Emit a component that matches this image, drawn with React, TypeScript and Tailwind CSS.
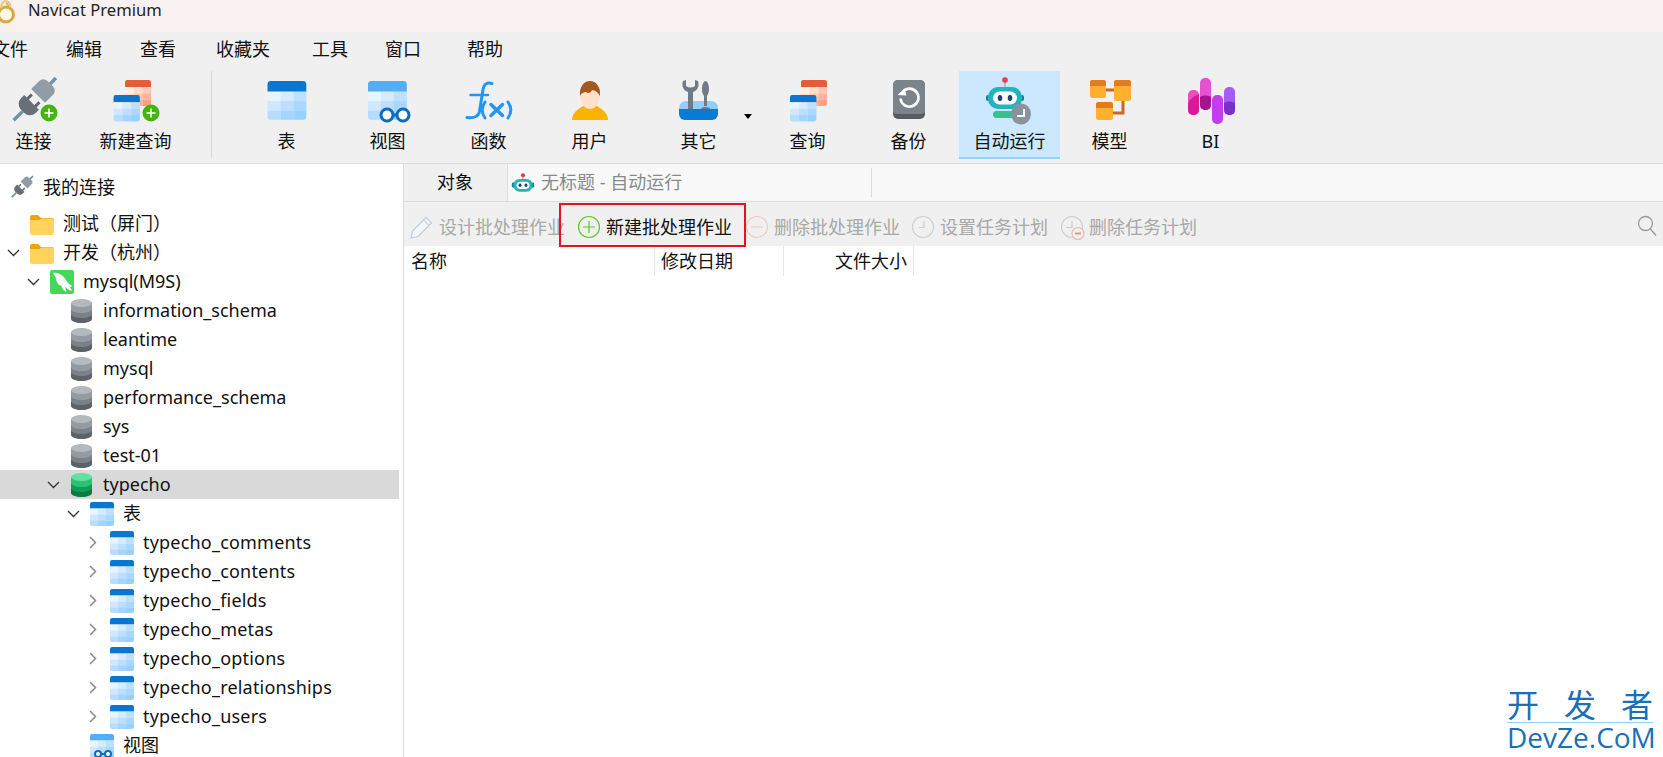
import type { ReactNode } from "react";

const BLUE = {
  head: "#0b76cf",
  cells: ["#e8f4ff", "#d6ebff", "#bde0ff", "#d0e8ff", "#bcdeff", "#a8d7ff", "#b6dcff", "#a4d5ff", "#98d0ff"],
};
const RED = {
  head: "#e65c38",
  cells: ["#ffeee8", "#ffdccf", "#ffc7b4", "#ffdccf", "#ffc7b4", "#ffb199", "#ffc7b4", "#ffb199", "#ff9f84"],
};

// 40x40 grid with a coloured head, placed with x/y and scale
function Grid({ x = 0, y = 0, s = 1, theme = BLUE, head }: { x?: number; y?: number; s?: number; theme?: typeof BLUE; head?: string }) {
  const cols = [0, 13.4, 26.7];
  const rows = [11, 20.7, 30.3];
  return (
    <g transform={`translate(${x} ${y}) scale(${s})`}>
      <path d="M0 3.5A3.5 3.5 0 0 1 3.5 0h33A3.5 3.5 0 0 1 40 3.5V11H0z" fill={head ?? theme.head} />
      {rows.map((ry, r) =>
        cols.map((cx, c) => {
          const fill = theme.cells[r * 3 + c];
          if (r === 2 && c === 0) return <path key={c} d="M0 30.3h13.4V40H3.5A3.5 3.5 0 0 1 0 36.5z" fill={fill} />;
          if (r === 2 && c === 2) return <path key={c} d="M26.7 30.3H40v6.2a3.5 3.5 0 0 1-3.5 3.5h-9.8z" fill={fill} />;
          return <rect key={`${r}${c}`} x={cx} y={ry} width="13.4" height="9.7" fill={fill} />;
        })
      )}
    </g>
  );
}

function Badge() {
  return (
    <g>
      <circle cx="39" cy="37" r="8.5" fill="#43b50f" />
      <path d="M39 32.5v9M34.5 37h9" stroke="#fff" strokeWidth="1.6" />
    </g>
  );
}

function Plug() {
  return (
    <g transform="translate(24 24) scale(1.15) translate(-24 -24) rotate(45 24 24)">
      <rect x="22.5" y="-3" width="3" height="9" fill="#6d93ad" />
      <path d="M15.5 9a5 5 0 0 1 5-5h7a5 5 0 0 1 5 5v10h-17z" fill="#929ca5" />
      <path d="M18 22h2.6v6H18zM27.4 22H30v6h-2.6z" fill="#5f666d" />
      <path d="M15 27h18v4a7 7 0 0 1-7 7h-4a7 7 0 0 1-7-7z" fill="#686f76" />
      <rect x="22.5" y="38" width="3" height="11" fill="#6d93ad" />
    </g>
  );
}

function Glasses({ x1, x2, y, r, w }: { x1: number; x2: number; y: number; r: number; w: number }) {
  return (
    <g fill="#fff" stroke="#0b6cc4" strokeWidth={w}>
      <path d={`M${x1} ${y}H${x2}`} />
      <circle cx={x1} cy={y} r={r} />
      <circle cx={x2} cy={y} r={r} />
    </g>
  );
}

function Icon48({ children }: { children: ReactNode }) {
  return (
    <svg width="48" height="48" viewBox="0 0 48 48" className="overflow-visible">
      {children}
    </svg>
  );
}

const toolbarIcons: Record<string, ReactNode> = {
  connect: (
    <>
      <Plug />
      <Badge />
    </>
  ),
  newQuery: (
    <>
      <Grid x={13} y={4} s={0.65} theme={RED} />
      <Grid x={1.5} y={19} s={0.66} />
      <Badge />
    </>
  ),
  table: <Grid x={4.5} y={5} s={0.97} />,
  view: (
    <>
      <Grid x={4} y={5} s={0.97} head="#55aef5" />
      <Glasses x1={23} x2={39} y={39} r={6} w={3} />
    </>
  ),
  func: (
    <g fill="none" stroke="#2196f3" strokeLinecap="round">
      <path d="M27 7.5c-5-1.500-8 .5-9 6l-3.500 22c-1 5-6 7-12.500 6" strokeWidth="3" />
      <path d="M5.500 19H23" strokeWidth="2.500" />
      <path d="M20 26c-3.500 5-3.500 11 0 16M43 26c3.500 5 3.500 11 0 16" strokeWidth="3" />
      <path d="M26 28.500l11.500 11M37.500 28.500L26 39.500" strokeWidth="3.500" />
    </g>
  ),
  user: (
    <>
      <path d="M6 44c0-7 6-11 11-14h14c5 3 11 7 11 14z" fill="#f8b400" />
      <ellipse cx="24" cy="19" rx="10" ry="14" fill="#ffe0c8" />
      <path d="M14 20c-1-9 4-15 10-15s11 6 10 15c-2-4-5-6-8-6-1 3-4 4-6 2-2 0-5 1-6 4z" fill="#a3591e" />
    </>
  ),
  tools: (
    <>
      <path d="M4 32a7 7 0 0 1 7-7h25a7 7 0 0 1 7 7v2H4z" fill="#93cdfb" />
      <path d="M8 5C6.500 10 8 14 13 16V34h5V16c5-2 6.500-6 5-11l-3-1v6q-4.500 3-9 0V4z" fill="#6f7b86" />
      <path d="M30.500 5c2 0 3.500 4 3.500 8s-1.500 6-2 7v10h-3V20c-.5-1-2-3-2-7s1.500-8 3.500-8z" fill="#6f7b86" />
      <path d="M26 32.500c1-2 8-2 9 0v1.500h-9z" fill="#6f7b86" />
      <path d="M4 33h39v5a6 6 0 0 1-6 6H10a6 6 0 0 1-6-6z" fill="#0b7ad2" />
    </>
  ),
  query: (
    <>
      <Grid x={17} y={4} s={0.65} theme={RED} />
      <Grid x={6} y={19} s={0.66} />
    </>
  ),
  backup: (
    <>
      <rect x="8" y="4" width="32" height="39" rx="5" fill="#565c63" />
      <path d="M8 9a5 5 0 0 1 5-5h22a5 5 0 0 1 5 5v25a4 4 0 0 1-4 4H12a4 4 0 0 1-4-4z" fill="#7c848b" />
      <path d="M19 14.500a9 9 0 1 1-3.500 8" fill="none" stroke="#fff" strokeWidth="2.600" />
      <path d="M12.500 19l9 .5-2-7z" fill="#fff" />
    </>
  ),
  robot: (
    <>
      <path d="M19 5v7" stroke="#a9b1b8" strokeWidth="1.500" />
      <circle cx="19" cy="4" r="2.800" fill="#ec3a4e" />
      <rect x="0" y="19" width="4" height="6" rx="2" fill="#1f7f95" />
      <rect x="34" y="19" width="4" height="6" rx="2" fill="#1f7f95" />
      <rect x="2" y="11" width="34" height="22" rx="10" fill="#22b5bd" />
      <rect x="7" y="15.500" width="24" height="13" rx="6.500" fill="#fff" />
      <ellipse cx="14" cy="22" rx="2.300" ry="3" fill="#24407a" />
      <ellipse cx="24" cy="22" rx="2.300" ry="3" fill="#24407a" />
      <rect x="7" y="35" width="24" height="7" rx="3.500" fill="#35c18f" />
      <ellipse cx="35" cy="38" rx="10" ry="10.500" fill="#8a939b" />
      <path d="M38 33v7h-7" fill="none" stroke="#fff" strokeWidth="2" />
    </>
  ),
  model: (
    <>
      <path d="M19 14h10M37 24v13H26" fill="none" stroke="#c96a22" strokeWidth="3" />
      <rect x="4" y="4" width="16" height="18" rx="2.500" fill="#ffb02e" />
      <path d="M4 6.500A2.500 2.500 0 0 1 6.500 4h11A2.500 2.500 0 0 1 20 6.500V10H4z" fill="#e27c20" />
      <rect x="28" y="4" width="17" height="21" rx="2.500" fill="#ffb02e" />
      <path d="M28 6.500A2.500 2.500 0 0 1 30.500 4h12A2.500 2.500 0 0 1 45 6.500V10H28z" fill="#e27c20" />
      <rect x="10" y="26" width="17" height="18" rx="2.500" fill="#ffb02e" />
      <path d="M10 28.500a2.500 2.500 0 0 1 2.500-2.500h12a2.500 2.500 0 0 1 2.500 2.500V32H10z" fill="#e27c20" />
    </>
  ),
  bi: (
    <>
      <rect x="1" y="14" width="11" height="25" rx="5" fill="#f04cc2" />
      <path d="M1 27c2-4 6-7 11-9v16a5 5 0 0 1-5 5H6a5 5 0 0 1-5-5z" fill="#d81b94" />
      <rect x="13" y="2" width="11" height="32" rx="5" fill="#e650d2" />
      <path d="M13 21c3-2 8-2 11 0v8a5 5 0 0 1-5 5h-1a5 5 0 0 1-5-5z" fill="#a5148f" />
      <rect x="25" y="19" width="11" height="29" rx="5" fill="#c43cf2" />
      <rect x="37" y="11" width="11" height="28" rx="5" fill="#a55cf6" />
      <path d="M37 27c3-2 8-2 11 0v7a5 5 0 0 1-5 5h-1a5 5 0 0 1-5-5z" fill="#7a30c8" />
    </>
  ),
};

const toolbar = [
  { label: "表", icon: "table" },
  { label: "视图", icon: "view" },
  { label: "函数", icon: "func" },
  { label: "用户", icon: "user" },
];
const toolbarRest = [
  { label: "查询", icon: "query" },
  { label: "备份", icon: "backup" },
  { label: "自动运行", icon: "robot", active: true },
  { label: "模型", icon: "model", cls: "ml-[-1px]" },
  { label: "BI", icon: "bi" },
];

function ToolButton({ label, icon, active, wide, cls = "" }: { label: string; icon: string; active?: boolean; wide?: boolean; cls?: string }) {
  return (
    <div className={`relative h-[88px] pt-[5px] shrink-0 ${wide ? "w-[117px]" : "w-[101px]"} ${active ? "bg-[#cce8ff] border-b-2 border-[#99d1ff]" : ""} ${cls}`}>
      <div className="flex flex-col items-center">
        <Icon48>{toolbarIcons[icon]}</Icon48>
        <span className="mt-[5px] text-[18px] leading-[24px]">{label}</span>
      </div>
      {wide && <span className="absolute left-[104px] top-[43px] w-0 h-0 border-x-[4px] border-t-[5px] border-x-transparent border-t-black" />}
    </div>
  );
}

const menus = [
  { label: "文件", cls: "ml-[-8px]" },
  { label: "编辑", cls: "ml-[38px]" },
  { label: "查看", cls: "ml-[38px]" },
  { label: "收藏夹", cls: "ml-[40px]" },
  { label: "工具", cls: "ml-[42px]" },
  { label: "窗口", cls: "ml-[37px]" },
  { label: "帮助", cls: "ml-[46px]" },
];

type Kind = "folder" | "mysql" | "db" | "dbOn" | "table" | "view";
type Row = { label: string; level: number; kind: Kind; chevron?: "open" | "closed"; selected?: boolean };

const rows: Row[] = [
  { label: "测试（屏门）", level: 0, kind: "folder" },
  { label: "开发（杭州）", level: 0, kind: "folder", chevron: "open" },
  { label: "mysql(M9S)", level: 1, kind: "mysql", chevron: "open" },
  { label: "information_schema", level: 2, kind: "db" },
  { label: "leantime", level: 2, kind: "db" },
  { label: "mysql", level: 2, kind: "db" },
  { label: "performance_schema", level: 2, kind: "db" },
  { label: "sys", level: 2, kind: "db" },
  { label: "test-01", level: 2, kind: "db" },
  { label: "typecho", level: 2, kind: "dbOn", chevron: "open", selected: true },
  { label: "表", level: 3, kind: "table", chevron: "open" },
  { label: "typecho_comments", level: 4, kind: "table", chevron: "closed" },
  { label: "typecho_contents", level: 4, kind: "table", chevron: "closed" },
  { label: "typecho_fields", level: 4, kind: "table", chevron: "closed" },
  { label: "typecho_metas", level: 4, kind: "table", chevron: "closed" },
  { label: "typecho_options", level: 4, kind: "table", chevron: "closed" },
  { label: "typecho_relationships", level: 4, kind: "table", chevron: "closed" },
  { label: "typecho_users", level: 4, kind: "table", chevron: "closed" },
  { label: "视图", level: 3, kind: "view" },
];

function Cylinder({ c }: { c: string[] }) {
  return (
    <g>
      <path d="M1 4v16c0 2.200 4.500 4 10.500 4S22 22.200 22 20V4z" fill={c[3]} />
      <path d="M1 4v11c0 2.200 4.500 4 10.500 4S22 17.200 22 15V4z" fill={c[2]} />
      <path d="M1 4v6c0 2.200 4.500 4 10.500 4S22 12.200 22 10V4z" fill={c[1]} />
      <ellipse cx="11.500" cy="4" rx="10.500" ry="4" fill={c[0]} />
    </g>
  );
}

function TreeIcon({ kind }: { kind: Kind }) {
  let body: ReactNode = null;
  if (kind === "folder") {
    body = (
      <>
        <path d="M0 5a2 2 0 0 1 2-2h6l3 3h11a2 2 0 0 1 2 2v5H0z" fill="#f0a30a" />
        <path d="M0 8h9l3-1.500h10a2 2 0 0 1 2 2V21a2 2 0 0 1-2 2H2a2 2 0 0 1-2-2z" fill="#ffd35c" />
      </>
    );
  } else if (kind === "mysql") {
    body = (
      <>
        <rect x="0" y="0" width="24" height="24" rx="2" fill="#44d85a" />
        <path d="M3 3C8 2 13 5 16 10c1.500 3 4 5 6.500 6L20 17l2 4c-3-1-5-2-6.500-4l.5 5c-3-2-4-4-4.500-6C8 15 6.500 12 6 8.500 5.500 6.500 4 5 3 3z" fill="#fff" />
      </>
    );
  } else if (kind === "db") {
    body = <Cylinder c={["#b4b9bf", "#959ba2", "#7b8188", "#5c6268"]} />;
  } else if (kind === "dbOn") {
    body = <Cylinder c={["#62e0a2", "#2cc274", "#0f9c54", "#0a7a40"]} />;
  } else if (kind === "table") {
    body = <Grid s={0.6} />;
  } else {
    body = (
      <>
        <Grid s={0.6} head="#55aef5" />
        <Glasses x1={8} x2={18} y={20} r={3} w={2} />
      </>
    );
  }
  return (
    <svg width="24" height="24" viewBox="0 0 24 24" className="shrink-0 overflow-visible">
      {body}
    </svg>
  );
}

function Chevron({ dir }: { dir?: "open" | "closed" }) {
  return (
    <span className="w-5 h-5 flex items-center justify-center shrink-0">
      {dir === "open" && (
        <svg width="13" height="8" viewBox="0 0 13 8" fill="none" stroke="#333" strokeWidth="1.300">
          <path d="M1 1l5.500 5.500L12 1" />
        </svg>
      )}
      {dir === "closed" && (
        <svg width="8" height="13" viewBox="0 0 8 13" fill="none" stroke="#8a8a8a" strokeWidth="1.500">
          <path d="M1 1l5.500 5.500L1 12" />
        </svg>
      )}
    </span>
  );
}

const indents = ["pl-[3px]", "pl-[23px]", "pl-[43px]", "pl-[63px]", "pl-[83px]"];

function TreeRow({ row }: { row: Row }) {
  return (
    <div className={`h-[29px] flex items-center whitespace-nowrap text-[18px] ${indents[row.level]} ${row.selected ? "bg-[#d9d9d9]" : ""}`}>
      <Chevron dir={row.chevron} />
      <span className="ml-[7px]">
        <TreeIcon kind={row.kind} />
      </span>
      <span className={`ml-[9px] ${row.level === 4 ? "tracking-[0.2px]" : ""}`}>{row.label}</span>
    </div>
  );
}

function ActionIcon({ kind }: { kind: string }) {
  return (
    <svg width="22" height="22" viewBox="0 0 22 22" fill="none" className="shrink-0 overflow-visible">
      {kind === "pencil" && (
        <g strokeWidth="1.200">
          <path d="M0 22l1.500-7L15 1.500l5.500 5.500L7 20.500z" stroke="#bcd0de" fill="#f4f6f8" />
          <path d="M12.500 4l5.500 5.500" stroke="#d0d0d0" />
        </g>
      )}
      {kind === "plus" && (
        <g stroke="#5cc62c" strokeWidth="1.200">
          <circle cx="11" cy="11" r="10.500" />
          <path d="M11 5v12M5 11h12" />
        </g>
      )}
      {kind === "minus" && (
        <g stroke="#eecbc6" strokeWidth="1.200">
          <circle cx="11" cy="11" r="10.500" />
          <path d="M5 11h12" />
        </g>
      )}
      {kind === "clock" && (
        <g stroke="#cfcfcf" strokeWidth="1.200">
          <circle cx="11" cy="11" r="10.500" />
          <path d="M12 5v6.500H7" />
        </g>
      )}
      {kind === "clockMinus" && (
        <g strokeWidth="1.200">
          <circle cx="11" cy="11" r="10.500" stroke="#cfcfcf" />
          <path d="M11 5v6.500H5" stroke="#cfcfcf" />
          <circle cx="17" cy="17.500" r="6" stroke="#eab9b3" fill="#f0f0f0" />
          <path d="M14 17.500h6" stroke="#e29a90" strokeWidth="2" />
        </g>
      )}
    </svg>
  );
}

const actions = [
  { label: "设计批处理作业", icon: "pencil", cls: "ml-[7px]" },
  { label: "新建批处理作业", icon: "plus", cls: "ml-[13px]", on: true },
  { label: "删除批处理作业", icon: "minus", cls: "ml-[14px]" },
  { label: "设置任务计划", icon: "clock", cls: "ml-[12px]" },
  { label: "删除任务计划", icon: "clockMinus", cls: "ml-[13px]" },
];

export default function App() {
  return (
    <div className="relative w-[1663px] h-[757px] overflow-hidden flex flex-col bg-white text-[#111] font-['Noto_Sans','Noto_Sans_CJK_SC',sans-serif]">
      <div className="h-[32px] shrink-0 bg-[#f9f0f0] flex items-center">
        <svg width="22" height="24" viewBox="0 0 22 24" className="ml-[-3px] mt-[-8px] shrink-0" fill="none">
          <circle cx="9" cy="14.500" r="7.500" fill="#fdf6ea" stroke="#d8a93f" strokeWidth="3" />
          <path d="M5 8C3 4 6 2 8 1c3 0 6 2 5 6" stroke="#e6c886" strokeWidth="2" />
          <path d="M9 3c2 1 3 3 2 5" stroke="#d8a93f" strokeWidth="1.400" />
        </svg>
        <span className="ml-[9px] text-[16.6px] mt-[-12px] text-[#222]">Navicat Premium</span>
      </div>

      <div className="h-[34px] shrink-0 bg-[#f0f0f0] flex items-center text-[18px] whitespace-nowrap">
        {menus.map((m) => (
          <span key={m.label} className={m.cls}>
            {m.label}
          </span>
        ))}
      </div>

      <div className="h-[98px] shrink-0 bg-[#f0f0f0] border-b border-[#dcdcdc] flex items-start pt-[5px] whitespace-nowrap">
        <div className="ml-[-17px] flex shrink-0">
          <ToolButton label="连接" icon="connect" />
          <ToolButton label="新建查询" icon="newQuery" cls="ml-[1px]" />
        </div>
        <div className="ml-[25px] w-px h-[87px] bg-[#d9d9d9] shrink-0" />
        <div className="ml-[24px] flex shrink-0">
          {toolbar.map((t) => (
            <ToolButton key={t.label} {...t} />
          ))}
          <ToolButton label="其它" icon="tools" wide />
          {toolbarRest.map((t) => (
            <ToolButton key={t.label} {...t} />
          ))}
        </div>
      </div>

      <div className="flex-1 min-h-0 flex">
        <aside className="w-[404px] shrink-0 border-r border-[#dcdcdc] overflow-hidden pr-[4px]">
          <div className="h-[30px] mt-[8px] flex items-center text-[18px]">
            <svg width="24" height="24" viewBox="0 0 48 48" className="ml-[10px] overflow-visible">
              <Plug />
            </svg>
            <span className="ml-[9px]">我的连接</span>
          </div>
          <div className="mt-[7px]">
            {rows.map((r) => (
              <TreeRow key={r.label} row={r} />
            ))}
          </div>
        </aside>

        <section className="flex-1 min-w-0 flex flex-col">
          <div className="h-[38px] shrink-0 bg-[#f8f8f8] border-b border-[#dcdcdc] flex items-stretch text-[18px]">
            <div className="w-[104px] bg-[#f0f0f0] border-r border-[#dcdcdc] flex items-center pl-[33px]">对象</div>
            <div className="w-[364px] flex items-center pl-[2px] text-[#8a8a8a] relative">
              <svg width="24" height="20" viewBox="0 0 38 34" className="ml-[1px] shrink-0 overflow-visible">
                <path d="M19 5v7" stroke="#a9b1b8" strokeWidth="2" />
                <circle cx="19" cy="4" r="3.500" fill="#ec3a4e" />
                <rect x="0" y="16" width="5" height="9" rx="2.500" fill="#1f7f95" />
                <rect x="33" y="16" width="5" height="9" rx="2.500" fill="#1f7f95" />
                <rect x="3" y="10" width="32" height="22" rx="10" fill="#22b5bd" />
                <rect x="8" y="15" width="22" height="12" rx="6" fill="#fff" />
                <ellipse cx="14" cy="21" rx="2.500" ry="3" fill="#24407a" />
                <ellipse cx="24" cy="21" rx="2.500" ry="3" fill="#24407a" />
              </svg>
              <span className="ml-[6px]">无标题 - 自动运行</span>
              <span className="absolute right-0 top-[4px] bottom-[4px] w-px bg-[#dcdcdc]" />
            </div>
          </div>

          <div className="h-[44px] shrink-0 bg-[#f0f0f0] flex items-center text-[18px] text-[#a8a8a8] whitespace-nowrap">
            {actions.map((a) => (
              <div key={a.label} className={`relative flex items-center gap-[6px] pt-[6px] ${a.cls} ${a.on ? "text-[#111]" : ""}`}>
                <ActionIcon kind={a.icon} />
                <span>{a.label}</span>
                {a.on && <span className="absolute left-[-19px] right-[-14px] top-[-5px] h-[44px] border-2 border-[#e81123]" />}
              </div>
            ))}
            <svg width="20" height="22" viewBox="0 0 20 22" fill="none" stroke="#9a9a9a" strokeWidth="1.300" className="ml-auto mr-[6px] mt-[4px]">
              <circle cx="8.500" cy="8.500" r="7" />
              <path d="M13.500 14l5.500 6.500" />
            </svg>
          </div>

          <div className="h-[30px] shrink-0 flex text-[18px] whitespace-nowrap">
            <div className="w-[251px] border-r border-[#e8e8e8] pl-[7px] leading-[30px]">名称</div>
            <div className="w-[129px] border-r border-[#e8e8e8] pl-[6px] leading-[30px]">修改日期</div>
            <div className="w-[130px] border-r border-[#e8e8e8] pr-[6px] text-right leading-[30px]">文件大小</div>
          </div>
        </section>
      </div>

      <div className="absolute left-[1507px] top-[688px] w-[146px] text-[#1a6fb8] whitespace-nowrap">
        <div className="h-[34px] flex justify-between text-[32px] leading-[34px]">
          <span>开</span>
          <span>发</span>
          <span>者</span>
        </div>
        <div className="h-px bg-[#8fd3f7]" />
        <div className="text-[28px] leading-[28px] font-['Open_Sans',sans-serif]">DevZe.CoM</div>
      </div>
    </div>
  );
}
